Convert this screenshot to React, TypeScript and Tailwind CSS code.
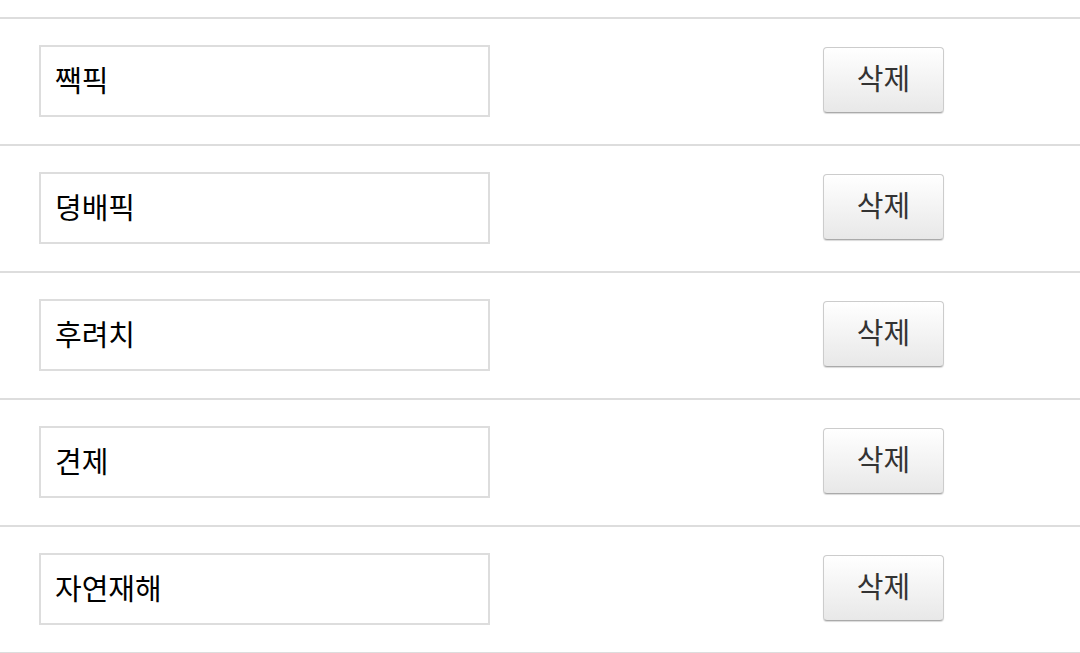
import { useState } from "react";

const initial = ["짹픽", "뎡배픽", "후려치", "견제", "자연재해"];

export default function App() {
  const [words, setWords] = useState<string[]>(initial);

  return (
    <div
      className="min-h-screen bg-white pt-[17px]"
      style={{ fontFamily: '"Noto Sans CJK KR", "Noto Sans", sans-serif' }}
    >
      {words.map((word, i) => (
        <div
          key={i}
          className="flex items-start justify-between border-t-2 border-[#dddddd] h-[127px] pt-[26px] pl-[39px] pr-[136px]"
        >
          <input
            value={word}
            onChange={(e) => {
              const next = [...words];
              next[i] = e.target.value;
              setWords(next);
            }}
            className="w-[451px] h-[72px] border-2 border-[#dddddd] px-[14px] pb-[4px] text-[29px] text-black outline-none"
          />
          <button
            onClick={() => setWords(words.filter((_, j) => j !== i))}
            className="mt-[2px] w-[121px] h-[66px] pb-[4px] rounded-[4px] border border-[#cccccc] border-b-[#aaaaaa] bg-gradient-to-b from-white to-[#e8e8e8] text-[29px] text-[#333333] shadow-[0_1px_1px_rgba(0,0,0,0.15)]"
          >
            삭제
          </button>
        </div>
      ))}
      <div className="border-t-2 border-[#dddddd]" />
    </div>
  );
}
